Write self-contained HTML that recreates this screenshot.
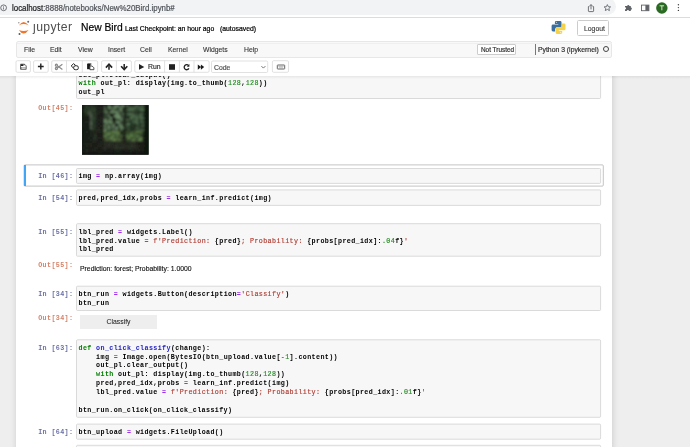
<!DOCTYPE html>
<html><head><meta charset="utf-8">
<style>
*{box-sizing:border-box}
html,body{margin:0;padding:0}
body{width:690px;height:447px;overflow:hidden;position:relative;background:#fff;font-family:"Liberation Sans",sans-serif}
.a{position:absolute}
body>*{will-change:transform}
.t{position:absolute;white-space:pre;line-height:1;font-family:"Liberation Sans",sans-serif;-webkit-text-stroke:0.2px currentColor}
.m{position:absolute;white-space:pre;font-family:"Liberation Mono",monospace;font-size:6.700px;letter-spacing:0.384px;line-height:8.88px;color:#000;margin:0;font-weight:bold}
.pr{position:absolute;white-space:pre;font-family:"Liberation Mono",monospace;font-size:6.700px;letter-spacing:0.384px;line-height:1;left:38.20px;text-align:left;font-weight:bold;opacity:0.72}
.pin{color:#2c3580}
.pout{color:#C4502C}
.box{position:absolute;left:76.3px;width:224.4px;right:auto;background:#f7f7f7;border:0.6px solid #cfcfcf;border-radius:1px}
.btn{position:absolute;top:60.5px;height:12px;background:#fff;border:0.6px solid #ccc;border-radius:1.5px}
.k{color:#008000;font-weight:bold}
.o{color:#A030F0;font-weight:bold}
.n{color:#1f8a1f;font-weight:normal;-webkit-text-stroke:0.15px currentColor}
.s{color:#B03a30;font-weight:normal;-webkit-text-stroke:0.15px currentColor}
.d{color:#1c1cc8}
.bk{color:#997}
</style></head><body>

<!-- ===== Chrome toolbar ===== -->
<div class="a" style="left:0;top:0;width:690px;height:17.5px;background:#fff;border-bottom:0.7px solid #dcdcdc"></div>
<div class="a" style="left:-20px;top:-2px;width:635.5px;height:16.8px;background:#f2f3f5;border-radius:9px"></div>
<svg class="a" style="left:0;top:4px" width="8" height="8" viewBox="0 0 8 8"><circle cx="3.6" cy="3.8" r="2.9" fill="none" stroke="#5f6368" stroke-width="0.9"/><rect x="3.2" y="3.3" width="0.8" height="2.2" fill="#5f6368"/><rect x="3.2" y="1.9" width="0.8" height="0.8" fill="#5f6368"/></svg>
<div class="t" style="left:11.9px;top:4.9px;font-size:7.9px;color:#202124;transform:scaleY(1.16);transform-origin:0 6.7px">localhost<span style="color:#50545a">:8888/notebooks/New%20Bird.ipynb#</span></div>
<!-- chrome icons -->
<svg class="a" style="left:0;top:0" width="690" height="17" viewBox="0 0 690 17">
 <path d="M589.3 6.6 H588.4 V10.9 Q588.4 11.6 589.1 11.6 H592.9 Q593.6 11.6 593.6 10.9 V6.6 H592.7" fill="none" stroke="#5f6368" stroke-width="0.9"/>
 <path d="M591 9.4 V4.8" stroke="#5f6368" stroke-width="0.9"/>
 <path d="M589.5 6.2 L591 4.5 L592.5 6.2" fill="none" stroke="#5f6368" stroke-width="0.9"/>
 <path d="M607.35 4.6 L608.3 6.7 L610.6 6.9 L608.9 8.4 L609.4 10.6 L607.35 9.4 L605.3 10.6 L605.8 8.4 L604.1 6.9 L606.4 6.7 Z" fill="none" stroke="#5f6368" stroke-width="0.85" stroke-linejoin="round"/>
 <path d="M625 6.1 H627.2 A1.1 1.1 0 0 1 629.4 6.1 H630.8 V7.6 A1.1 1.1 0 0 1 630.8 9.8 V11 H629 A1.1 1.1 0 0 0 626.8 11 H625 V9.4 A1.1 1.1 0 0 0 625 7.2 Z" fill="#5f6368"/>
 <rect x="641.5" y="5.1" width="7.4" height="5.6" fill="none" stroke="#5f6368" stroke-width="0.9"/>
 <rect x="645.4" y="5.1" width="3.5" height="5.6" fill="#5f6368"/>
 <circle cx="661.85" cy="7.95" r="5.7" fill="#2b6a22"/>
 <path d="M659.6 5.8 H664.1 M661.85 5.8 V10.3" stroke="#e8f0e0" stroke-width="0.9"/>
 <circle cx="678.4" cy="4.8" r="0.7" fill="#3c4043"/>
 <circle cx="678.4" cy="7.6" r="0.7" fill="#3c4043"/>
 <circle cx="678.4" cy="10.4" r="0.7" fill="#3c4043"/>
</svg>

<!-- ===== Jupyter header ===== -->
<svg class="a" style="left:15px;top:18px" width="18" height="19" viewBox="0 0 18 19">
 <path d="M3.8 7.4 Q8.7 0.4 13.6 7.4 Q8.7 4.6 3.8 7.4 Z" fill="#F37726"/>
 <path d="M3.8 11.9 Q8.7 19.1 13.6 11.9 Q8.7 14.2 3.8 11.9 Z" fill="#F37726"/>
 <circle cx="3.8" cy="4.7" r="0.8" fill="#9a9a9a"/>
 <circle cx="13.2" cy="3.8" r="1" fill="#6a6a6a"/>
 <circle cx="4.5" cy="16" r="1" fill="#5a5a5a"/>
</svg>
<div class="t" style="left:33.4px;top:21.0px;font-size:12.2px;letter-spacing:0.42px;color:#4e4e4e;-webkit-text-stroke:0">ȷupyter</div>
<div class="t" style="left:81.2px;top:23.2px;font-size:10.3px;color:#000">New Bird</div>
<div class="t" style="left:125px;top:25.5px;font-size:6.83px;color:#000">Last Checkpoint: an hour ago</div>
<div class="t" style="left:219.5px;top:25.5px;font-size:6.83px;color:#000">(autosaved)</div>
<!-- python logo -->
<svg class="a" style="left:0;top:0" width="600" height="40" viewBox="0 0 600 40">
 <defs><path id="py" d="M556.2 20.9 H560.1 Q561.5 20.9 561.5 22.3 V26.4 Q561.5 27.8 560.1 27.8 H556.6 Q555.1 27.8 555.1 29.3 V31.4 H553 Q551.6 31.4 551.6 30 V25.9 Q551.6 24.5 553 24.5 H558.3 V23.9 H554.9 V22.2 Q554.9 20.9 556.2 20.9 Z"/></defs>
 <use href="#py" fill="#3b6fa0"/>
 <use href="#py" fill="#f5d24b" transform="rotate(180 558.55 27.4)"/>
 <circle cx="556.4" cy="22.2" r="0.55" fill="#dfe8f0"/>
 <circle cx="560.7" cy="32.6" r="0.55" fill="#fff8d8"/>
</svg>
<div class="a" style="left:577.3px;top:20.2px;width:31.7px;height:15.7px;border:0.6px solid #ccc;border-radius:1.5px;background:#fff"></div>
<div class="t" style="left:583.5px;top:26.0px;font-size:6.83px;color:#333;-webkit-text-stroke:0.1px">Logout</div>

<!-- menubar -->
<div class="a" style="left:15.7px;top:40.5px;width:596px;height:16.8px;background:#f8f8f8;border:0.6px solid #e7e7e7;border-radius:2px"></div>
<div class="a" style="left:16.5px;top:43.3px;width:594.5px;height:0.6px;background:#efefef"></div>
<div class="t" style="left:24.2px;top:46.6px;font-size:6.83px;color:#333;-webkit-text-stroke:0.1px">File</div>
<div class="t" style="left:50.4px;top:46.6px;font-size:6.83px;color:#333;-webkit-text-stroke:0.1px">Edit</div>
<div class="t" style="left:77.6px;top:46.6px;font-size:6.83px;color:#333;-webkit-text-stroke:0.1px">View</div>
<div class="t" style="left:107.6px;top:46.6px;font-size:6.83px;color:#333;-webkit-text-stroke:0.1px">Insert</div>
<div class="t" style="left:140.3px;top:46.6px;font-size:6.83px;color:#333;-webkit-text-stroke:0.1px">Cell</div>
<div class="t" style="left:167.6px;top:46.6px;font-size:6.83px;color:#333;-webkit-text-stroke:0.1px">Kernel</div>
<div class="t" style="left:203.2px;top:46.6px;font-size:6.83px;color:#333;-webkit-text-stroke:0.1px">Widgets</div>
<div class="t" style="left:244.3px;top:46.6px;font-size:6.83px;color:#333;-webkit-text-stroke:0.1px">Help</div>
<div class="a" style="left:477.4px;top:44px;width:39.4px;height:10.5px;border:0.6px solid #ccc;border-radius:1px;background:#fff"></div>
<div class="t" style="left:480.9px;top:46.8px;font-size:6.4px;color:#333">Not Trusted</div>
<div class="a" style="left:535px;top:44px;width:0.8px;height:10.5px;background:#777"></div>
<div class="t" style="left:538.2px;top:46.6px;font-size:6.83px;color:#333">Python 3 (ipykernel)</div>
<div class="a" style="left:602.6px;top:46.4px;width:6px;height:6px;border:0.8px solid #444;border-radius:50%"></div>

<!-- toolbar -->
<svg class="a" style="left:0;top:0" width="300" height="80" viewBox="0 0 300 80">
 <g fill="#fff" stroke="#d4d4d4" stroke-width="0.7">
  <rect x="16" y="60.7" width="14.4" height="11.6" rx="1.3"/>
  <rect x="33.6" y="60.7" width="14.6" height="11.6" rx="1.3"/>
  <rect x="51.7" y="60.7" width="45.9" height="11.6" rx="1.3"/>
  <rect x="101.6" y="60.7" width="29.8" height="11.6" rx="1.3"/>
  <rect x="134.8" y="60.7" width="74.3" height="11.6" rx="1.3"/>
  <rect x="211.5" y="61" width="56.2" height="11.5" rx="1.3"/>
  <rect x="272.4" y="60.7" width="16.1" height="11.6" rx="1.3"/>
 </g>
 <g stroke="#d4d4d4" stroke-width="0.7">
  <path d="M66.5 60.7 V72.3 M82.3 60.7 V72.3 M116.4 60.7 V72.3 M164.6 60.7 V72.3 M179.4 60.7 V72.3 M194 60.7 V72.3"/>
 </g>
 <!-- save -->
 <path d="M20.5 64.2 H24.5 L26.2 65.9 V69.3 H20.5 Z" fill="#fff" stroke="#555" stroke-width="0.9" stroke-linejoin="round"/>
 <rect x="21" y="64.3" width="2.4" height="1.7" fill="#222"/>
 <circle cx="24.3" cy="64.7" r="0.55" fill="#333"/>
 <rect x="21.6" y="67.4" width="3.6" height="1.5" fill="#fff" stroke="#777" stroke-width="0.5"/>
 <!-- plus -->
 <path d="M37.9 66.5 H43.7 M40.8 63.6 V69.4" stroke="#222" stroke-width="1.4"/>
 <!-- scissors -->
 <g fill="none" stroke="#8a8a8a" stroke-width="1.2">
  <circle cx="56.4" cy="65.2" r="1.05"/>
  <circle cx="56.4" cy="68.5" r="1.05"/>
  <path d="M57.3 65.8 L62.4 69.4 M57.3 67.9 L62.4 64.3"/>
 </g>
 <!-- copy -->
 <g fill="#fff" stroke="#2a2a2a" stroke-width="1" stroke-linejoin="round">
  <path d="M71.2 66 L73.5 63.6 L75.9 65.7 L73.6 68.1 Z"/>
  <rect x="73.7" y="65.8" width="4.6" height="3.9" rx="1.5"/>
 </g>
 <!-- paste -->
 <rect x="87.1" y="63.8" width="3.3" height="5.4" fill="#1a1a1a"/>
 <rect x="87.6" y="63.5" width="3.8" height="1" fill="#1a1a1a"/>
 <path d="M89.9 66 H92.1 L93.9 67.8 V69.7 H89.9 Z" fill="#fff" stroke="#333" stroke-width="0.85" stroke-linejoin="round"/>
 <!-- up -->
 <path d="M109 69.8 V65.2" stroke="#222" stroke-width="1.5"/>
 <path d="M105.9 67.6 L109 64.2 L112.1 67.6" fill="none" stroke="#222" stroke-width="1.6"/>
 <!-- down -->
 <path d="M124.2 64.1 V68.7" stroke="#222" stroke-width="1.5"/>
 <path d="M121.1 66.2 L124.2 69.6 L127.3 66.2" fill="none" stroke="#222" stroke-width="1.6"/>
 <!-- play -->
 <path d="M139 64 L144.3 66.9 L139 69.7 Z" fill="#222"/>
 <!-- stop -->
 <rect x="169" y="64.2" width="6" height="5.6" fill="#222"/>
 <!-- restart -->
 <path d="M188.6 65.6 A2.5 2.5 0 1 0 188.9 68.4" fill="none" stroke="#222" stroke-width="1.3"/>
 <path d="M189.4 64 V66.7 H186.8 Z" fill="#222"/>
 <!-- fast forward -->
 <path d="M197.8 64.4 L201.1 67.1 L197.8 69.8 Z M200.9 64.4 L204.2 67.1 L200.9 69.8 Z" fill="#1a1a1a"/>
 <!-- chevron -->
 <path d="M261.4 66.1 L263.4 68.1 L265.4 66.1" fill="none" stroke="#555" stroke-width="0.8"/>
 <!-- keyboard -->
 <rect x="277.3" y="65" width="7.4" height="4" rx="0.5" fill="#fff" stroke="#555" stroke-width="0.9"/>
 <path d="M278.4 66.4 H283.6 M278.9 67.8 H283.1" stroke="#888" stroke-width="0.55"/>
</svg>
<div class="t" style="left:147.8px;top:63.8px;font-size:6.83px;color:#333">Run</div>
<div class="t" style="left:213.8px;top:64.8px;font-size:6.83px;color:#555">Code</div>

<!-- ===== Notebook area ===== -->
<div class="a" style="left:0;top:0;width:690px;height:447px;clip-path:inset(76.2px 0 0 0)">
<div class="a" style="left:0;top:76.2px;width:690px;height:371px;background:#eeeeee;overflow:hidden">
 <div class="a" style="left:15.6px;top:-20px;width:596.1px;height:420px;background:#fff;box-shadow:0 0 6px 0.5px rgba(87,87,87,0.2)"></div>
</div>
<svg class="a" style="left:0;top:0" width="690" height="447"><g fill="#f7f7f7" stroke="#cfcfcf" stroke-width="0.75"><rect x="76.5" y="60.00" width="524.1" height="38.50" rx="1"/><rect x="76.5" y="168.50" width="524.1" height="14.90" rx="1"/><rect x="76.5" y="189.90" width="524.1" height="15.50" rx="1"/><rect x="76.5" y="223.70" width="524.1" height="32.50" rx="1"/><rect x="76.5" y="286.20" width="524.1" height="24.30" rx="1"/><rect x="76.5" y="339.80" width="524.1" height="77.50" rx="1"/><rect x="76.5" y="424.10" width="524.1" height="15.10" rx="1"/><rect x="76.5" y="445.30" width="524.1" height="24.70" rx="1"/></g></svg>
<pre class="m" style="left:78.50px;top:70.59px">out_pl.clear_output()</pre>
<pre class="m" style="left:78.50px;top:78.77px"><span class="k">with</span> out_pl: display(img.to_thumb(<span class="n">128</span>,<span class="n">128</span>))
out_pl</pre>
<div class="pr pout" style="top:105.06px">Out[45]:</div>
<svg class="a" style="left:82.2px;top:105.2px" width="66.6" height="49.7" viewBox="0 0 67 50" preserveAspectRatio="none"><defs><filter id="bl" x="-10%" y="-10%" width="120%" height="120%"><feGaussianBlur stdDeviation="0.85"/></filter><clipPath id="fc"><rect width="67" height="50"/></clipPath></defs><rect width="67" height="50" fill="#1e2a1c"/><g clip-path="url(#fc)"><g filter="url(#bl)" shape-rendering="crispEdges"><rect x="-4" y="-4" width="75" height="58" fill="#1c261b"/><rect x="0" y="0" width="2" height="2" fill="#0f160f"/><rect x="2" y="0" width="2" height="2" fill="#202c1f"/><rect x="4" y="0" width="2" height="2" fill="#2b3b29"/><rect x="6" y="0" width="2" height="2" fill="#1e2a1d"/><rect x="8" y="0" width="2" height="2" fill="#283727"/><rect x="10" y="0" width="2" height="2" fill="#253223"/><rect x="12" y="0" width="2" height="2" fill="#1e291d"/><rect x="14" y="0" width="2" height="2" fill="#1e201b"/><rect x="16" y="0" width="2" height="2" fill="#191b17"/><rect x="18" y="0" width="2" height="2" fill="#1d1f1a"/><rect x="20" y="0" width="2" height="2" fill="#1a1b17"/><rect x="22" y="0" width="2" height="2" fill="#283427"/><rect x="24" y="0" width="2" height="2" fill="#111510"/><rect x="26" y="0" width="2" height="2" fill="#617e5d"/><rect x="28" y="0" width="2" height="2" fill="#2b3829"/><rect x="30" y="0" width="2" height="2" fill="#334230"/><rect x="32" y="0" width="2" height="2" fill="#526a4e"/><rect x="34" y="0" width="2" height="2" fill="#6b8a66"/><rect x="36" y="0" width="2" height="2" fill="#4e654b"/><rect x="38" y="0" width="2" height="2" fill="#40533d"/><rect x="40" y="0" width="2" height="2" fill="#6d8d68"/><rect x="42" y="0" width="2" height="2" fill="#161915"/><rect x="44" y="0" width="2" height="2" fill="#4b6749"/><rect x="46" y="0" width="2" height="2" fill="#2d3e2c"/><rect x="48" y="0" width="2" height="2" fill="#253324"/><rect x="50" y="0" width="2" height="2" fill="#243123"/><rect x="52" y="0" width="2" height="2" fill="#2e3f2d"/><rect x="54" y="0" width="2" height="2" fill="#496447"/><rect x="56" y="0" width="2" height="2" fill="#273626"/><rect x="58" y="0" width="2" height="2" fill="#3c533b"/><rect x="60" y="0" width="2" height="2" fill="#3f573e"/><rect x="62" y="0" width="2" height="2" fill="#10160f"/><rect x="64" y="0" width="2" height="2" fill="#10170f"/><rect x="66" y="0" width="2" height="2" fill="#0f150e"/><rect x="0" y="2" width="2" height="2" fill="#0f150e"/><rect x="2" y="2" width="2" height="2" fill="#212e20"/><rect x="4" y="2" width="2" height="2" fill="#2b3b2a"/><rect x="6" y="2" width="2" height="2" fill="#263424"/><rect x="8" y="2" width="2" height="2" fill="#243122"/><rect x="10" y="2" width="2" height="2" fill="#293928"/><rect x="12" y="2" width="2" height="2" fill="#273525"/><rect x="14" y="2" width="2" height="2" fill="#1c1e19"/><rect x="16" y="2" width="2" height="2" fill="#21231d"/><rect x="18" y="2" width="2" height="2" fill="#20221d"/><rect x="20" y="2" width="2" height="2" fill="#1b1d18"/><rect x="22" y="2" width="2" height="2" fill="#4e654a"/><rect x="24" y="2" width="2" height="2" fill="#121510"/><rect x="26" y="2" width="2" height="2" fill="#658361"/><rect x="28" y="2" width="2" height="2" fill="#5a7456"/><rect x="30" y="2" width="2" height="2" fill="#384835"/><rect x="32" y="2" width="2" height="2" fill="#6d8d68"/><rect x="34" y="2" width="2" height="2" fill="#2b3729"/><rect x="36" y="2" width="2" height="2" fill="#42553f"/><rect x="38" y="2" width="2" height="2" fill="#5c7758"/><rect x="40" y="2" width="2" height="2" fill="#2d3a2b"/><rect x="42" y="2" width="2" height="2" fill="#191c17"/><rect x="44" y="2" width="2" height="2" fill="#202c1f"/><rect x="46" y="2" width="2" height="2" fill="#41593f"/><rect x="48" y="2" width="2" height="2" fill="#466044"/><rect x="50" y="2" width="2" height="2" fill="#3c523a"/><rect x="52" y="2" width="2" height="2" fill="#4c684a"/><rect x="54" y="2" width="2" height="2" fill="#2e402d"/><rect x="56" y="2" width="2" height="2" fill="#425b40"/><rect x="58" y="2" width="2" height="2" fill="#3d543b"/><rect x="60" y="2" width="2" height="2" fill="#3c533a"/><rect x="62" y="2" width="2" height="2" fill="#10160f"/><rect x="64" y="2" width="2" height="2" fill="#111810"/><rect x="66" y="2" width="2" height="2" fill="#111810"/><rect x="0" y="4" width="2" height="2" fill="#10160f"/><rect x="2" y="4" width="2" height="2" fill="#2b3b29"/><rect x="4" y="4" width="2" height="2" fill="#1e291d"/><rect x="6" y="4" width="2" height="2" fill="#2c3c2a"/><rect x="8" y="4" width="2" height="2" fill="#2b3a29"/><rect x="10" y="4" width="2" height="2" fill="#324530"/><rect x="12" y="4" width="2" height="2" fill="#2e402d"/><rect x="14" y="4" width="2" height="2" fill="#1c1d19"/><rect x="16" y="4" width="2" height="2" fill="#1d1e1a"/><rect x="18" y="4" width="2" height="2" fill="#20211c"/><rect x="20" y="4" width="2" height="2" fill="#191b16"/><rect x="22" y="4" width="2" height="2" fill="#455942"/><rect x="24" y="4" width="2" height="2" fill="#2e3c2c"/><rect x="26" y="4" width="2" height="2" fill="#11140f"/><rect x="28" y="4" width="2" height="2" fill="#263124"/><rect x="30" y="4" width="2" height="2" fill="#5d7859"/><rect x="32" y="4" width="2" height="2" fill="#2b3829"/><rect x="34" y="4" width="2" height="2" fill="#354432"/><rect x="36" y="4" width="2" height="2" fill="#40523d"/><rect x="38" y="4" width="2" height="2" fill="#658260"/><rect x="40" y="4" width="2" height="2" fill="#283326"/><rect x="42" y="4" width="2" height="2" fill="#191c17"/><rect x="44" y="4" width="2" height="2" fill="#3b5139"/><rect x="46" y="4" width="2" height="2" fill="#4c694a"/><rect x="48" y="4" width="2" height="2" fill="#496447"/><rect x="50" y="4" width="2" height="2" fill="#4b6749"/><rect x="52" y="4" width="2" height="2" fill="#2c3d2b"/><rect x="54" y="4" width="2" height="2" fill="#344732"/><rect x="56" y="4" width="2" height="2" fill="#31432f"/><rect x="58" y="4" width="2" height="2" fill="#4c694a"/><rect x="60" y="4" width="2" height="2" fill="#506e4e"/><rect x="62" y="4" width="2" height="2" fill="#0f150e"/><rect x="64" y="4" width="2" height="2" fill="#0f150e"/><rect x="66" y="4" width="2" height="2" fill="#0f150e"/><rect x="0" y="6" width="2" height="2" fill="#0f150e"/><rect x="2" y="6" width="2" height="2" fill="#273626"/><rect x="4" y="6" width="2" height="2" fill="#293928"/><rect x="6" y="6" width="2" height="2" fill="#414e40"/><rect x="8" y="6" width="2" height="2" fill="#3a4538"/><rect x="10" y="6" width="2" height="2" fill="#263424"/><rect x="12" y="6" width="2" height="2" fill="#253223"/><rect x="14" y="6" width="2" height="2" fill="#1f201b"/><rect x="16" y="6" width="2" height="2" fill="#23251f"/><rect x="18" y="6" width="2" height="2" fill="#20221d"/><rect x="20" y="6" width="2" height="2" fill="#1e201b"/><rect x="22" y="6" width="2" height="2" fill="#51694e"/><rect x="24" y="6" width="2" height="2" fill="#566f52"/><rect x="26" y="6" width="2" height="2" fill="#10140f"/><rect x="28" y="6" width="2" height="2" fill="#678563"/><rect x="30" y="6" width="2" height="2" fill="#5e795a"/><rect x="32" y="6" width="2" height="2" fill="#658361"/><rect x="34" y="6" width="2" height="2" fill="#5f7b5b"/><rect x="36" y="6" width="2" height="2" fill="#40523d"/><rect x="38" y="6" width="2" height="2" fill="#40533d"/><rect x="40" y="6" width="2" height="2" fill="#293628"/><rect x="42" y="6" width="2" height="2" fill="#191d18"/><rect x="44" y="6" width="2" height="2" fill="#212d20"/><rect x="46" y="6" width="2" height="2" fill="#212e20"/><rect x="48" y="6" width="2" height="2" fill="#293827"/><rect x="50" y="6" width="2" height="2" fill="#263525"/><rect x="52" y="6" width="2" height="2" fill="#30412e"/><rect x="54" y="6" width="2" height="2" fill="#202d1f"/><rect x="56" y="6" width="2" height="2" fill="#1e291d"/><rect x="58" y="6" width="2" height="2" fill="#263425"/><rect x="60" y="6" width="2" height="2" fill="#233022"/><rect x="62" y="6" width="2" height="2" fill="#10160f"/><rect x="64" y="6" width="2" height="2" fill="#0f150e"/><rect x="66" y="6" width="2" height="2" fill="#111810"/><rect x="0" y="8" width="2" height="2" fill="#10170f"/><rect x="2" y="8" width="2" height="2" fill="#202c1f"/><rect x="4" y="8" width="2" height="2" fill="#222f21"/><rect x="6" y="8" width="2" height="2" fill="#445142"/><rect x="8" y="8" width="2" height="2" fill="#445243"/><rect x="10" y="8" width="2" height="2" fill="#202b1e"/><rect x="12" y="8" width="2" height="2" fill="#2f402d"/><rect x="14" y="8" width="2" height="2" fill="#23251f"/><rect x="16" y="8" width="2" height="2" fill="#1e1f1a"/><rect x="18" y="8" width="2" height="2" fill="#1e1f1b"/><rect x="20" y="8" width="2" height="2" fill="#1a1b17"/><rect x="22" y="8" width="2" height="2" fill="#293527"/><rect x="24" y="8" width="2" height="2" fill="#3c4d39"/><rect x="26" y="8" width="2" height="2" fill="#364634"/><rect x="28" y="8" width="2" height="2" fill="#121611"/><rect x="30" y="8" width="2" height="2" fill="#2e3b2c"/><rect x="32" y="8" width="2" height="2" fill="#232e22"/><rect x="34" y="8" width="2" height="2" fill="#6b8a66"/><rect x="36" y="8" width="2" height="2" fill="#4a6047"/><rect x="38" y="8" width="2" height="2" fill="#2d3a2b"/><rect x="40" y="8" width="2" height="2" fill="#4c6248"/><rect x="42" y="8" width="2" height="2" fill="#161915"/><rect x="44" y="8" width="2" height="2" fill="#3a4f38"/><rect x="46" y="8" width="2" height="2" fill="#51704f"/><rect x="48" y="8" width="2" height="2" fill="#4b6749"/><rect x="50" y="8" width="2" height="2" fill="#425b40"/><rect x="52" y="8" width="2" height="2" fill="#2b3c2a"/><rect x="54" y="8" width="2" height="2" fill="#314330"/><rect x="56" y="8" width="2" height="2" fill="#263525"/><rect x="58" y="8" width="2" height="2" fill="#466144"/><rect x="60" y="8" width="2" height="2" fill="#3a4f38"/><rect x="62" y="8" width="2" height="2" fill="#111710"/><rect x="64" y="8" width="2" height="2" fill="#0f160f"/><rect x="66" y="8" width="2" height="2" fill="#0f150e"/><rect x="0" y="10" width="2" height="2" fill="#111810"/><rect x="2" y="10" width="2" height="2" fill="#1c221a"/><rect x="4" y="10" width="2" height="2" fill="#1b2119"/><rect x="6" y="10" width="2" height="2" fill="#1b2019"/><rect x="8" y="10" width="2" height="2" fill="#51624f"/><rect x="10" y="10" width="2" height="2" fill="#2d3d2b"/><rect x="12" y="10" width="2" height="2" fill="#222e20"/><rect x="14" y="10" width="2" height="2" fill="#1e201b"/><rect x="16" y="10" width="2" height="2" fill="#1d1e19"/><rect x="18" y="10" width="2" height="2" fill="#191b17"/><rect x="20" y="10" width="2" height="2" fill="#191b17"/><rect x="22" y="10" width="2" height="2" fill="#374735"/><rect x="24" y="10" width="2" height="2" fill="#354533"/><rect x="26" y="10" width="2" height="2" fill="#577053"/><rect x="28" y="10" width="2" height="2" fill="#131611"/><rect x="30" y="10" width="2" height="2" fill="#111510"/><rect x="32" y="10" width="2" height="2" fill="#6a8965"/><rect x="34" y="10" width="2" height="2" fill="#6e8e69"/><rect x="36" y="10" width="2" height="2" fill="#6b8b67"/><rect x="38" y="10" width="2" height="2" fill="#3e503b"/><rect x="40" y="10" width="2" height="2" fill="#324130"/><rect x="42" y="10" width="2" height="2" fill="#171a16"/><rect x="44" y="10" width="2" height="2" fill="#283727"/><rect x="46" y="10" width="2" height="2" fill="#283827"/><rect x="48" y="10" width="2" height="2" fill="#3f563d"/><rect x="50" y="10" width="2" height="2" fill="#4d6a4b"/><rect x="52" y="10" width="2" height="2" fill="#4a6648"/><rect x="54" y="10" width="2" height="2" fill="#374c35"/><rect x="56" y="10" width="2" height="2" fill="#40583e"/><rect x="58" y="10" width="2" height="2" fill="#486346"/><rect x="60" y="10" width="2" height="2" fill="#222f21"/><rect x="62" y="10" width="2" height="2" fill="#101710"/><rect x="64" y="10" width="2" height="2" fill="#111810"/><rect x="66" y="10" width="2" height="2" fill="#111710"/><rect x="0" y="12" width="2" height="2" fill="#111710"/><rect x="2" y="12" width="2" height="2" fill="#191e17"/><rect x="4" y="12" width="2" height="2" fill="#171b15"/><rect x="6" y="12" width="2" height="2" fill="#1b2019"/><rect x="8" y="12" width="2" height="2" fill="#435142"/><rect x="10" y="12" width="2" height="2" fill="#2e3f2c"/><rect x="12" y="12" width="2" height="2" fill="#324430"/><rect x="14" y="12" width="2" height="2" fill="#1d1f1a"/><rect x="16" y="12" width="2" height="2" fill="#1d1f1a"/><rect x="18" y="12" width="2" height="2" fill="#23241f"/><rect x="20" y="12" width="2" height="2" fill="#20221d"/><rect x="22" y="12" width="2" height="2" fill="#2f3c2c"/><rect x="24" y="12" width="2" height="2" fill="#2b3829"/><rect x="26" y="12" width="2" height="2" fill="#2d3a2b"/><rect x="28" y="12" width="2" height="2" fill="#688663"/><rect x="30" y="12" width="2" height="2" fill="#121611"/><rect x="32" y="12" width="2" height="2" fill="#2d3a2b"/><rect x="34" y="12" width="2" height="2" fill="#617e5d"/><rect x="36" y="12" width="2" height="2" fill="#6d8d68"/><rect x="38" y="12" width="2" height="2" fill="#546d51"/><rect x="40" y="12" width="2" height="2" fill="#3d4e3a"/><rect x="42" y="12" width="2" height="2" fill="#191c17"/><rect x="44" y="12" width="2" height="2" fill="#253223"/><rect x="46" y="12" width="2" height="2" fill="#1e2a1e"/><rect x="48" y="12" width="2" height="2" fill="#516f4f"/><rect x="50" y="12" width="2" height="2" fill="#40583e"/><rect x="52" y="12" width="2" height="2" fill="#394f38"/><rect x="54" y="12" width="2" height="2" fill="#4f6c4d"/><rect x="56" y="12" width="2" height="2" fill="#354833"/><rect x="58" y="12" width="2" height="2" fill="#4c6849"/><rect x="60" y="12" width="2" height="2" fill="#496547"/><rect x="62" y="12" width="2" height="2" fill="#0f150e"/><rect x="64" y="12" width="2" height="2" fill="#0f150e"/><rect x="66" y="12" width="2" height="2" fill="#0f160f"/><rect x="0" y="14" width="2" height="2" fill="#0f150e"/><rect x="2" y="14" width="2" height="2" fill="#191e18"/><rect x="4" y="14" width="2" height="2" fill="#171c16"/><rect x="6" y="14" width="2" height="2" fill="#181d17"/><rect x="8" y="14" width="2" height="2" fill="#3d4a3c"/><rect x="10" y="14" width="2" height="2" fill="#30422e"/><rect x="12" y="14" width="2" height="2" fill="#243223"/><rect x="14" y="14" width="2" height="2" fill="#1e1f1a"/><rect x="16" y="14" width="2" height="2" fill="#1f211c"/><rect x="18" y="14" width="2" height="2" fill="#22241e"/><rect x="20" y="14" width="2" height="2" fill="#1d1f1a"/><rect x="22" y="14" width="2" height="2" fill="#698764"/><rect x="24" y="14" width="2" height="2" fill="#485d45"/><rect x="26" y="14" width="2" height="2" fill="#4b6047"/><rect x="28" y="14" width="2" height="2" fill="#4a6047"/><rect x="30" y="14" width="2" height="2" fill="#10130f"/><rect x="32" y="14" width="2" height="2" fill="#111510"/><rect x="34" y="14" width="2" height="2" fill="#303e2d"/><rect x="36" y="14" width="2" height="2" fill="#222c20"/><rect x="38" y="14" width="2" height="2" fill="#5f7b5b"/><rect x="40" y="14" width="2" height="2" fill="#2f3c2d"/><rect x="42" y="14" width="2" height="2" fill="#191c17"/><rect x="44" y="14" width="2" height="2" fill="#445d42"/><rect x="46" y="14" width="2" height="2" fill="#3b5139"/><rect x="48" y="14" width="2" height="2" fill="#2f402d"/><rect x="50" y="14" width="2" height="2" fill="#394e37"/><rect x="52" y="14" width="2" height="2" fill="#3b5139"/><rect x="54" y="14" width="2" height="2" fill="#476245"/><rect x="56" y="14" width="2" height="2" fill="#233122"/><rect x="58" y="14" width="2" height="2" fill="#3b5139"/><rect x="60" y="14" width="2" height="2" fill="#2b3b2a"/><rect x="62" y="14" width="2" height="2" fill="#0f160f"/><rect x="64" y="14" width="2" height="2" fill="#111710"/><rect x="66" y="14" width="2" height="2" fill="#10160f"/><rect x="0" y="16" width="2" height="2" fill="#10170f"/><rect x="2" y="16" width="2" height="2" fill="#1b2019"/><rect x="4" y="16" width="2" height="2" fill="#1c211a"/><rect x="6" y="16" width="2" height="2" fill="#181d17"/><rect x="8" y="16" width="2" height="2" fill="#4b5a4a"/><rect x="10" y="16" width="2" height="2" fill="#283626"/><rect x="12" y="16" width="2" height="2" fill="#283726"/><rect x="14" y="16" width="2" height="2" fill="#20221d"/><rect x="16" y="16" width="2" height="2" fill="#1e1f1a"/><rect x="18" y="16" width="2" height="2" fill="#1e201b"/><rect x="20" y="16" width="2" height="2" fill="#1e1f1b"/><rect x="22" y="16" width="2" height="2" fill="#6a8966"/><rect x="24" y="16" width="2" height="2" fill="#587154"/><rect x="26" y="16" width="2" height="2" fill="#658361"/><rect x="28" y="16" width="2" height="2" fill="#6a8966"/><rect x="30" y="16" width="2" height="2" fill="#364533"/><rect x="32" y="16" width="2" height="2" fill="#121510"/><rect x="34" y="16" width="2" height="2" fill="#6b8a66"/><rect x="36" y="16" width="2" height="2" fill="#637f5e"/><rect x="38" y="16" width="2" height="2" fill="#2c392a"/><rect x="40" y="16" width="2" height="2" fill="#2b3729"/><rect x="42" y="16" width="2" height="2" fill="#181c17"/><rect x="44" y="16" width="2" height="2" fill="#212e20"/><rect x="46" y="16" width="2" height="2" fill="#2a3a29"/><rect x="48" y="16" width="2" height="2" fill="#222e21"/><rect x="50" y="16" width="2" height="2" fill="#41593f"/><rect x="52" y="16" width="2" height="2" fill="#476245"/><rect x="54" y="16" width="2" height="2" fill="#4d6a4b"/><rect x="56" y="16" width="2" height="2" fill="#263425"/><rect x="58" y="16" width="2" height="2" fill="#435d41"/><rect x="60" y="16" width="2" height="2" fill="#40593f"/><rect x="62" y="16" width="2" height="2" fill="#0f150e"/><rect x="64" y="16" width="2" height="2" fill="#111810"/><rect x="66" y="16" width="2" height="2" fill="#111810"/><rect x="0" y="18" width="2" height="2" fill="#0f150e"/><rect x="2" y="18" width="2" height="2" fill="#1c211a"/><rect x="4" y="18" width="2" height="2" fill="#181d17"/><rect x="6" y="18" width="2" height="2" fill="#191e17"/><rect x="8" y="18" width="2" height="2" fill="#566854"/><rect x="10" y="18" width="2" height="2" fill="#2f402d"/><rect x="12" y="18" width="2" height="2" fill="#202c1f"/><rect x="14" y="18" width="2" height="2" fill="#1d1f1a"/><rect x="16" y="18" width="2" height="2" fill="#1e201b"/><rect x="18" y="18" width="2" height="2" fill="#1c1e19"/><rect x="20" y="18" width="2" height="2" fill="#1b1c18"/><rect x="22" y="18" width="2" height="2" fill="#3a4b37"/><rect x="24" y="18" width="2" height="2" fill="#597355"/><rect x="26" y="18" width="2" height="2" fill="#232d21"/><rect x="28" y="18" width="2" height="2" fill="#4c6349"/><rect x="30" y="18" width="2" height="2" fill="#445741"/><rect x="32" y="18" width="2" height="2" fill="#3c473b"/><rect x="34" y="18" width="2" height="2" fill="#111410"/><rect x="36" y="18" width="2" height="2" fill="#526a4e"/><rect x="38" y="18" width="2" height="2" fill="#495e46"/><rect x="40" y="18" width="2" height="2" fill="#263225"/><rect x="42" y="18" width="2" height="2" fill="#1b1f19"/><rect x="44" y="18" width="2" height="2" fill="#476245"/><rect x="46" y="18" width="2" height="2" fill="#516f4f"/><rect x="48" y="18" width="2" height="2" fill="#233022"/><rect x="50" y="18" width="2" height="2" fill="#2c3c2a"/><rect x="52" y="18" width="2" height="2" fill="#202c1f"/><rect x="54" y="18" width="2" height="2" fill="#476145"/><rect x="56" y="18" width="2" height="2" fill="#2c3c2b"/><rect x="58" y="18" width="2" height="2" fill="#243223"/><rect x="60" y="18" width="2" height="2" fill="#344732"/><rect x="62" y="18" width="2" height="2" fill="#111810"/><rect x="64" y="18" width="2" height="2" fill="#111810"/><rect x="66" y="18" width="2" height="2" fill="#0f150e"/><rect x="0" y="20" width="2" height="2" fill="#0f150e"/><rect x="2" y="20" width="2" height="2" fill="#1c211a"/><rect x="4" y="20" width="2" height="2" fill="#191e18"/><rect x="6" y="20" width="2" height="2" fill="#1a1f18"/><rect x="8" y="20" width="2" height="2" fill="#3c483b"/><rect x="10" y="20" width="2" height="2" fill="#1e291d"/><rect x="12" y="20" width="2" height="2" fill="#2c3c2a"/><rect x="14" y="20" width="2" height="2" fill="#1d1f1a"/><rect x="16" y="20" width="2" height="2" fill="#1a1b17"/><rect x="18" y="20" width="2" height="2" fill="#23241f"/><rect x="20" y="20" width="2" height="2" fill="#1f211c"/><rect x="22" y="20" width="2" height="2" fill="#607b5b"/><rect x="24" y="20" width="2" height="2" fill="#283426"/><rect x="26" y="20" width="2" height="2" fill="#64815f"/><rect x="28" y="20" width="2" height="2" fill="#273225"/><rect x="30" y="20" width="2" height="2" fill="#648160"/><rect x="32" y="20" width="2" height="2" fill="#475445"/><rect x="34" y="20" width="2" height="2" fill="#111410"/><rect x="36" y="20" width="2" height="2" fill="#4c6349"/><rect x="38" y="20" width="2" height="2" fill="#698865"/><rect x="40" y="20" width="2" height="2" fill="#364634"/><rect x="42" y="20" width="2" height="2" fill="#171a15"/><rect x="44" y="20" width="2" height="2" fill="#394f38"/><rect x="46" y="20" width="2" height="2" fill="#2a3a29"/><rect x="48" y="20" width="2" height="2" fill="#233122"/><rect x="50" y="20" width="2" height="2" fill="#263525"/><rect x="52" y="20" width="2" height="2" fill="#202d1f"/><rect x="54" y="20" width="2" height="2" fill="#283727"/><rect x="56" y="20" width="2" height="2" fill="#2e3f2d"/><rect x="58" y="20" width="2" height="2" fill="#2e3f2c"/><rect x="60" y="20" width="2" height="2" fill="#466044"/><rect x="62" y="20" width="2" height="2" fill="#0f160f"/><rect x="64" y="20" width="2" height="2" fill="#10160f"/><rect x="66" y="20" width="2" height="2" fill="#0f150e"/><rect x="0" y="22" width="2" height="2" fill="#0f160f"/><rect x="2" y="22" width="2" height="2" fill="#161a14"/><rect x="4" y="22" width="2" height="2" fill="#171c16"/><rect x="6" y="22" width="2" height="2" fill="#161a14"/><rect x="8" y="22" width="2" height="2" fill="#4f5f4d"/><rect x="10" y="22" width="2" height="2" fill="#293827"/><rect x="12" y="22" width="2" height="2" fill="#212d20"/><rect x="14" y="22" width="2" height="2" fill="#1e1f1b"/><rect x="16" y="22" width="2" height="2" fill="#22241f"/><rect x="18" y="22" width="2" height="2" fill="#1a1b17"/><rect x="20" y="22" width="2" height="2" fill="#21231e"/><rect x="22" y="22" width="2" height="2" fill="#435640"/><rect x="24" y="22" width="2" height="2" fill="#485d45"/><rect x="26" y="22" width="2" height="2" fill="#627f5e"/><rect x="28" y="22" width="2" height="2" fill="#40533d"/><rect x="30" y="22" width="2" height="2" fill="#495e45"/><rect x="32" y="22" width="2" height="2" fill="#4c5a4b"/><rect x="34" y="22" width="2" height="2" fill="#6e8d69"/><rect x="36" y="22" width="2" height="2" fill="#111410"/><rect x="38" y="22" width="2" height="2" fill="#627e5e"/><rect x="40" y="22" width="2" height="2" fill="#587254"/><rect x="42" y="22" width="2" height="2" fill="#191d18"/><rect x="44" y="22" width="2" height="2" fill="#334632"/><rect x="46" y="22" width="2" height="2" fill="#30422f"/><rect x="48" y="22" width="2" height="2" fill="#212d20"/><rect x="50" y="22" width="2" height="2" fill="#243223"/><rect x="52" y="22" width="2" height="2" fill="#212e20"/><rect x="54" y="22" width="2" height="2" fill="#455f43"/><rect x="56" y="22" width="2" height="2" fill="#2b3b2a"/><rect x="58" y="22" width="2" height="2" fill="#263525"/><rect x="60" y="22" width="2" height="2" fill="#222f21"/><rect x="62" y="22" width="2" height="2" fill="#111810"/><rect x="64" y="22" width="2" height="2" fill="#111810"/><rect x="66" y="22" width="2" height="2" fill="#101710"/><rect x="0" y="24" width="2" height="2" fill="#0f160f"/><rect x="2" y="24" width="2" height="2" fill="#171c16"/><rect x="4" y="24" width="2" height="2" fill="#171c16"/><rect x="6" y="24" width="2" height="2" fill="#191d17"/><rect x="8" y="24" width="2" height="2" fill="#202c1f"/><rect x="10" y="24" width="2" height="2" fill="#263525"/><rect x="12" y="24" width="2" height="2" fill="#232f21"/><rect x="14" y="24" width="2" height="2" fill="#23251f"/><rect x="16" y="24" width="2" height="2" fill="#23251f"/><rect x="18" y="24" width="2" height="2" fill="#1f201b"/><rect x="20" y="24" width="2" height="2" fill="#1b1d18"/><rect x="22" y="24" width="2" height="2" fill="#6c8c67"/><rect x="24" y="24" width="2" height="2" fill="#394a37"/><rect x="26" y="24" width="2" height="2" fill="#3d4f3a"/><rect x="28" y="24" width="2" height="2" fill="#212b20"/><rect x="30" y="24" width="2" height="2" fill="#3f513c"/><rect x="32" y="24" width="2" height="2" fill="#475446"/><rect x="34" y="24" width="2" height="2" fill="#485d45"/><rect x="36" y="24" width="2" height="2" fill="#11140f"/><rect x="38" y="24" width="2" height="2" fill="#495e45"/><rect x="40" y="24" width="2" height="2" fill="#222c20"/><rect x="42" y="24" width="2" height="2" fill="#181b16"/><rect x="44" y="24" width="2" height="2" fill="#222f21"/><rect x="46" y="24" width="2" height="2" fill="#334631"/><rect x="48" y="24" width="2" height="2" fill="#202c1f"/><rect x="50" y="24" width="2" height="2" fill="#1f2b1e"/><rect x="52" y="24" width="2" height="2" fill="#2e3f2c"/><rect x="54" y="24" width="2" height="2" fill="#2a3a29"/><rect x="56" y="24" width="2" height="2" fill="#3d533b"/><rect x="58" y="24" width="2" height="2" fill="#3a4f38"/><rect x="60" y="24" width="2" height="2" fill="#455f43"/><rect x="62" y="24" width="2" height="2" fill="#101710"/><rect x="64" y="24" width="2" height="2" fill="#111710"/><rect x="66" y="24" width="2" height="2" fill="#111810"/><rect x="0" y="26" width="2" height="2" fill="#10160f"/><rect x="2" y="26" width="2" height="2" fill="#181c16"/><rect x="4" y="26" width="2" height="2" fill="#1c221a"/><rect x="6" y="26" width="2" height="2" fill="#161b15"/><rect x="8" y="26" width="2" height="2" fill="#1c231b"/><rect x="10" y="26" width="2" height="2" fill="#1c221a"/><rect x="12" y="26" width="2" height="2" fill="#1c2419"/><rect x="14" y="26" width="2" height="2" fill="#21231e"/><rect x="16" y="26" width="2" height="2" fill="#22241e"/><rect x="18" y="26" width="2" height="2" fill="#1f211c"/><rect x="20" y="26" width="2" height="2" fill="#20221d"/><rect x="22" y="26" width="2" height="2" fill="#5b7847"/><rect x="24" y="26" width="2" height="2" fill="#36482a"/><rect x="26" y="26" width="2" height="2" fill="#4b643a"/><rect x="28" y="26" width="2" height="2" fill="#4a623a"/><rect x="30" y="26" width="2" height="2" fill="#5c7a48"/><rect x="32" y="26" width="2" height="2" fill="#5a7846"/><rect x="34" y="26" width="2" height="2" fill="#5b7947"/><rect x="36" y="26" width="2" height="2" fill="#4e683d"/><rect x="38" y="26" width="2" height="2" fill="#131611"/><rect x="40" y="26" width="2" height="2" fill="#273123"/><rect x="42" y="26" width="2" height="2" fill="#1a1d18"/><rect x="44" y="26" width="2" height="2" fill="#384d2c"/><rect x="46" y="26" width="2" height="2" fill="#2e3f24"/><rect x="48" y="26" width="2" height="2" fill="#334628"/><rect x="50" y="26" width="2" height="2" fill="#3f5632"/><rect x="52" y="26" width="2" height="2" fill="#324427"/><rect x="54" y="26" width="2" height="2" fill="#587845"/><rect x="56" y="26" width="2" height="2" fill="#49643a"/><rect x="58" y="26" width="2" height="2" fill="#4d693d"/><rect x="60" y="26" width="2" height="2" fill="#263022"/><rect x="62" y="26" width="2" height="2" fill="#101710"/><rect x="64" y="26" width="2" height="2" fill="#10160f"/><rect x="66" y="26" width="2" height="2" fill="#0f140e"/><rect x="0" y="28" width="2" height="2" fill="#111810"/><rect x="2" y="28" width="2" height="2" fill="#1a2019"/><rect x="4" y="28" width="2" height="2" fill="#191e17"/><rect x="6" y="28" width="2" height="2" fill="#191e17"/><rect x="8" y="28" width="2" height="2" fill="#1c231a"/><rect x="10" y="28" width="2" height="2" fill="#181d16"/><rect x="12" y="28" width="2" height="2" fill="#283324"/><rect x="14" y="28" width="2" height="2" fill="#1c1d19"/><rect x="16" y="28" width="2" height="2" fill="#1a1b17"/><rect x="18" y="28" width="2" height="2" fill="#1c1d19"/><rect x="20" y="28" width="2" height="2" fill="#20221d"/><rect x="22" y="28" width="2" height="2" fill="#3a4d2d"/><rect x="24" y="28" width="2" height="2" fill="#577344"/><rect x="26" y="28" width="2" height="2" fill="#63844e"/><rect x="28" y="28" width="2" height="2" fill="#496139"/><rect x="30" y="28" width="2" height="2" fill="#435934"/><rect x="32" y="28" width="2" height="2" fill="#486039"/><rect x="34" y="28" width="2" height="2" fill="#546f41"/><rect x="36" y="28" width="2" height="2" fill="#587545"/><rect x="38" y="28" width="2" height="2" fill="#121510"/><rect x="40" y="28" width="2" height="2" fill="#263123"/><rect x="42" y="28" width="2" height="2" fill="#171a15"/><rect x="44" y="28" width="2" height="2" fill="#344729"/><rect x="46" y="28" width="2" height="2" fill="#394f2d"/><rect x="48" y="28" width="2" height="2" fill="#537142"/><rect x="50" y="28" width="2" height="2" fill="#3c5230"/><rect x="52" y="28" width="2" height="2" fill="#4a653a"/><rect x="54" y="28" width="2" height="2" fill="#2d3e24"/><rect x="56" y="28" width="2" height="2" fill="#2f4125"/><rect x="58" y="28" width="2" height="2" fill="#3a502e"/><rect x="60" y="28" width="2" height="2" fill="#273123"/><rect x="62" y="28" width="2" height="2" fill="#101710"/><rect x="64" y="28" width="2" height="2" fill="#101710"/><rect x="66" y="28" width="2" height="2" fill="#0f160f"/><rect x="0" y="30" width="2" height="2" fill="#10160f"/><rect x="2" y="30" width="2" height="2" fill="#191d17"/><rect x="4" y="30" width="2" height="2" fill="#191d17"/><rect x="6" y="30" width="2" height="2" fill="#161b15"/><rect x="8" y="30" width="2" height="2" fill="#1e251c"/><rect x="10" y="30" width="2" height="2" fill="#191e17"/><rect x="12" y="30" width="2" height="2" fill="#2c3828"/><rect x="14" y="30" width="2" height="2" fill="#22241f"/><rect x="16" y="30" width="2" height="2" fill="#191a16"/><rect x="18" y="30" width="2" height="2" fill="#1e1f1a"/><rect x="20" y="30" width="2" height="2" fill="#21231e"/><rect x="22" y="30" width="2" height="2" fill="#63844d"/><rect x="24" y="30" width="2" height="2" fill="#475e37"/><rect x="26" y="30" width="2" height="2" fill="#3d5130"/><rect x="28" y="30" width="2" height="2" fill="#3a4d2d"/><rect x="30" y="30" width="2" height="2" fill="#62824c"/><rect x="32" y="30" width="2" height="2" fill="#3a4d2d"/><rect x="34" y="30" width="2" height="2" fill="#4e683d"/><rect x="36" y="30" width="2" height="2" fill="#36482a"/><rect x="38" y="30" width="2" height="2" fill="#4b643a"/><rect x="40" y="30" width="2" height="2" fill="#2b3727"/><rect x="42" y="30" width="2" height="2" fill="#171a15"/><rect x="44" y="30" width="2" height="2" fill="#577745"/><rect x="46" y="30" width="2" height="2" fill="#476138"/><rect x="48" y="30" width="2" height="2" fill="#5a7b47"/><rect x="50" y="30" width="2" height="2" fill="#516e40"/><rect x="52" y="30" width="2" height="2" fill="#384d2d"/><rect x="54" y="30" width="2" height="2" fill="#5b7c48"/><rect x="56" y="30" width="2" height="2" fill="#455f37"/><rect x="58" y="30" width="2" height="2" fill="#2e3e24"/><rect x="60" y="30" width="2" height="2" fill="#1b2319"/><rect x="62" y="30" width="2" height="2" fill="#10160f"/><rect x="64" y="30" width="2" height="2" fill="#10160f"/><rect x="66" y="30" width="2" height="2" fill="#0f160f"/><rect x="0" y="32" width="2" height="2" fill="#0f150e"/><rect x="2" y="32" width="2" height="2" fill="#181c16"/><rect x="4" y="32" width="2" height="2" fill="#181c16"/><rect x="6" y="32" width="2" height="2" fill="#1b2019"/><rect x="8" y="32" width="2" height="2" fill="#171d16"/><rect x="10" y="32" width="2" height="2" fill="#1c231b"/><rect x="12" y="32" width="2" height="2" fill="#293526"/><rect x="14" y="32" width="2" height="2" fill="#1a1c17"/><rect x="16" y="32" width="2" height="2" fill="#22241f"/><rect x="18" y="32" width="2" height="2" fill="#20221d"/><rect x="20" y="32" width="2" height="2" fill="#22241e"/><rect x="22" y="32" width="2" height="2" fill="#3e5330"/><rect x="24" y="32" width="2" height="2" fill="#435934"/><rect x="26" y="32" width="2" height="2" fill="#445a35"/><rect x="28" y="32" width="2" height="2" fill="#65864f"/><rect x="30" y="32" width="2" height="2" fill="#4e683d"/><rect x="32" y="32" width="2" height="2" fill="#425833"/><rect x="34" y="32" width="2" height="2" fill="#465d36"/><rect x="36" y="32" width="2" height="2" fill="#3d5230"/><rect x="38" y="32" width="2" height="2" fill="#314126"/><rect x="40" y="32" width="2" height="2" fill="#1d251a"/><rect x="42" y="32" width="2" height="2" fill="#1a1e19"/><rect x="44" y="32" width="2" height="2" fill="#3b512f"/><rect x="46" y="32" width="2" height="2" fill="#5d7f49"/><rect x="48" y="32" width="2" height="2" fill="#394e2d"/><rect x="50" y="32" width="2" height="2" fill="#3a4f2e"/><rect x="52" y="32" width="2" height="2" fill="#476138"/><rect x="54" y="32" width="2" height="2" fill="#364a2b"/><rect x="56" y="32" width="2" height="2" fill="#405732"/><rect x="58" y="32" width="2" height="2" fill="#5e804a"/><rect x="60" y="32" width="2" height="2" fill="#2a3626"/><rect x="62" y="32" width="2" height="2" fill="#111810"/><rect x="64" y="32" width="2" height="2" fill="#10170f"/><rect x="66" y="32" width="2" height="2" fill="#111810"/><rect x="0" y="34" width="2" height="2" fill="#111810"/><rect x="2" y="34" width="2" height="2" fill="#191e18"/><rect x="4" y="34" width="2" height="2" fill="#1a1f19"/><rect x="6" y="34" width="2" height="2" fill="#161a14"/><rect x="8" y="34" width="2" height="2" fill="#1c231b"/><rect x="10" y="34" width="2" height="2" fill="#1a2119"/><rect x="12" y="34" width="2" height="2" fill="#283324"/><rect x="14" y="34" width="2" height="2" fill="#20211c"/><rect x="16" y="34" width="2" height="2" fill="#1c1d19"/><rect x="18" y="34" width="2" height="2" fill="#191b17"/><rect x="20" y="34" width="2" height="2" fill="#22241f"/><rect x="22" y="34" width="2" height="2" fill="#35472a"/><rect x="24" y="34" width="2" height="2" fill="#486038"/><rect x="26" y="34" width="2" height="2" fill="#415733"/><rect x="28" y="34" width="2" height="2" fill="#3f5331"/><rect x="30" y="34" width="2" height="2" fill="#577344"/><rect x="32" y="34" width="2" height="2" fill="#63844e"/><rect x="34" y="34" width="2" height="2" fill="#3d512f"/><rect x="36" y="34" width="2" height="2" fill="#526d40"/><rect x="38" y="34" width="2" height="2" fill="#3f5431"/><rect x="40" y="34" width="2" height="2" fill="#252f21"/><rect x="42" y="34" width="2" height="2" fill="#181b17"/><rect x="44" y="34" width="2" height="2" fill="#35482a"/><rect x="46" y="34" width="2" height="2" fill="#35482a"/><rect x="48" y="34" width="2" height="2" fill="#374b2c"/><rect x="50" y="34" width="2" height="2" fill="#5b7d48"/><rect x="52" y="34" width="2" height="2" fill="#466037"/><rect x="54" y="34" width="2" height="2" fill="#384c2c"/><rect x="56" y="34" width="2" height="2" fill="#5b7d48"/><rect x="58" y="34" width="2" height="2" fill="#60834c"/><rect x="60" y="34" width="2" height="2" fill="#232c20"/><rect x="62" y="34" width="2" height="2" fill="#0f150e"/><rect x="64" y="34" width="2" height="2" fill="#0f150e"/><rect x="66" y="34" width="2" height="2" fill="#0f150e"/><rect x="0" y="36" width="2" height="2" fill="#0f160f"/><rect x="2" y="36" width="2" height="2" fill="#161a15"/><rect x="4" y="36" width="2" height="2" fill="#171c16"/><rect x="6" y="36" width="2" height="2" fill="#171c16"/><rect x="8" y="36" width="2" height="2" fill="#1d1f19"/><rect x="10" y="36" width="2" height="2" fill="#20221b"/><rect x="12" y="36" width="2" height="2" fill="#1f201a"/><rect x="14" y="36" width="2" height="2" fill="#1d1f1a"/><rect x="16" y="36" width="2" height="2" fill="#1d1f1a"/><rect x="18" y="36" width="2" height="2" fill="#1e201b"/><rect x="20" y="36" width="2" height="2" fill="#1d1e1a"/><rect x="22" y="36" width="2" height="2" fill="#252920"/><rect x="24" y="36" width="2" height="2" fill="#20241c"/><rect x="26" y="36" width="2" height="2" fill="#24281f"/><rect x="28" y="36" width="2" height="2" fill="#2f3429"/><rect x="30" y="36" width="2" height="2" fill="#21251d"/><rect x="32" y="36" width="2" height="2" fill="#272c22"/><rect x="34" y="36" width="2" height="2" fill="#292e24"/><rect x="36" y="36" width="2" height="2" fill="#2d3227"/><rect x="38" y="36" width="2" height="2" fill="#23271e"/><rect x="40" y="36" width="2" height="2" fill="#23281f"/><rect x="42" y="36" width="2" height="2" fill="#171b16"/><rect x="44" y="36" width="2" height="2" fill="#262a21"/><rect x="46" y="36" width="2" height="2" fill="#262b21"/><rect x="48" y="36" width="2" height="2" fill="#2e3429"/><rect x="50" y="36" width="2" height="2" fill="#2d3227"/><rect x="52" y="36" width="2" height="2" fill="#2d3327"/><rect x="54" y="36" width="2" height="2" fill="#20231c"/><rect x="56" y="36" width="2" height="2" fill="#181914"/><rect x="58" y="36" width="2" height="2" fill="#1e201a"/><rect x="60" y="36" width="2" height="2" fill="#20221b"/><rect x="62" y="36" width="2" height="2" fill="#10160f"/><rect x="64" y="36" width="2" height="2" fill="#10170f"/><rect x="66" y="36" width="2" height="2" fill="#0f140e"/><rect x="0" y="38" width="2" height="2" fill="#10160f"/><rect x="2" y="38" width="2" height="2" fill="#1c211a"/><rect x="4" y="38" width="2" height="2" fill="#1b2019"/><rect x="6" y="38" width="2" height="2" fill="#1b2119"/><rect x="8" y="38" width="2" height="2" fill="#21231c"/><rect x="10" y="38" width="2" height="2" fill="#1a1b16"/><rect x="12" y="38" width="2" height="2" fill="#181a15"/><rect x="14" y="38" width="2" height="2" fill="#1b1c18"/><rect x="16" y="38" width="2" height="2" fill="#1e201b"/><rect x="18" y="38" width="2" height="2" fill="#20221c"/><rect x="20" y="38" width="2" height="2" fill="#23241f"/><rect x="22" y="38" width="2" height="2" fill="#2b3025"/><rect x="24" y="38" width="2" height="2" fill="#292f24"/><rect x="26" y="38" width="2" height="2" fill="#2b3126"/><rect x="28" y="38" width="2" height="2" fill="#262b22"/><rect x="30" y="38" width="2" height="2" fill="#282d23"/><rect x="32" y="38" width="2" height="2" fill="#20241c"/><rect x="34" y="38" width="2" height="2" fill="#2c3126"/><rect x="36" y="38" width="2" height="2" fill="#23271f"/><rect x="38" y="38" width="2" height="2" fill="#2e3328"/><rect x="40" y="38" width="2" height="2" fill="#292f24"/><rect x="42" y="38" width="2" height="2" fill="#242820"/><rect x="44" y="38" width="2" height="2" fill="#21251d"/><rect x="46" y="38" width="2" height="2" fill="#23281f"/><rect x="48" y="38" width="2" height="2" fill="#292e24"/><rect x="50" y="38" width="2" height="2" fill="#2a2f25"/><rect x="52" y="38" width="2" height="2" fill="#21251d"/><rect x="54" y="38" width="2" height="2" fill="#20241c"/><rect x="56" y="38" width="2" height="2" fill="#1c1e18"/><rect x="58" y="38" width="2" height="2" fill="#1d1f19"/><rect x="60" y="38" width="2" height="2" fill="#1b1d17"/><rect x="62" y="38" width="2" height="2" fill="#0f150e"/><rect x="64" y="38" width="2" height="2" fill="#10170f"/><rect x="66" y="38" width="2" height="2" fill="#0f150e"/><rect x="0" y="40" width="2" height="2" fill="#0f160f"/><rect x="2" y="40" width="2" height="2" fill="#191d17"/><rect x="4" y="40" width="2" height="2" fill="#1c211a"/><rect x="6" y="40" width="2" height="2" fill="#1a1f18"/><rect x="8" y="40" width="2" height="2" fill="#20221b"/><rect x="10" y="40" width="2" height="2" fill="#1c1e18"/><rect x="12" y="40" width="2" height="2" fill="#1a1b16"/><rect x="14" y="40" width="2" height="2" fill="#1b1d18"/><rect x="16" y="40" width="2" height="2" fill="#23251f"/><rect x="18" y="40" width="2" height="2" fill="#20221d"/><rect x="20" y="40" width="2" height="2" fill="#1c1e19"/><rect x="22" y="40" width="2" height="2" fill="#20231c"/><rect x="24" y="40" width="2" height="2" fill="#272c22"/><rect x="26" y="40" width="2" height="2" fill="#2a2f25"/><rect x="28" y="40" width="2" height="2" fill="#262b21"/><rect x="30" y="40" width="2" height="2" fill="#23281f"/><rect x="32" y="40" width="2" height="2" fill="#2a2f25"/><rect x="34" y="40" width="2" height="2" fill="#2e3428"/><rect x="36" y="40" width="2" height="2" fill="#23271e"/><rect x="38" y="40" width="2" height="2" fill="#20241c"/><rect x="40" y="40" width="2" height="2" fill="#252920"/><rect x="42" y="40" width="2" height="2" fill="#262b21"/><rect x="44" y="40" width="2" height="2" fill="#2a2f25"/><rect x="46" y="40" width="2" height="2" fill="#22271e"/><rect x="48" y="40" width="2" height="2" fill="#2c3126"/><rect x="50" y="40" width="2" height="2" fill="#2b3026"/><rect x="52" y="40" width="2" height="2" fill="#272c22"/><rect x="54" y="40" width="2" height="2" fill="#22271e"/><rect x="56" y="40" width="2" height="2" fill="#21231c"/><rect x="58" y="40" width="2" height="2" fill="#1a1c17"/><rect x="60" y="40" width="2" height="2" fill="#1f211b"/><rect x="62" y="40" width="2" height="2" fill="#0f150e"/><rect x="64" y="40" width="2" height="2" fill="#0f150e"/><rect x="66" y="40" width="2" height="2" fill="#111710"/><rect x="0" y="42" width="2" height="2" fill="#0f160f"/><rect x="2" y="42" width="2" height="2" fill="#1c211a"/><rect x="4" y="42" width="2" height="2" fill="#191e17"/><rect x="6" y="42" width="2" height="2" fill="#171b15"/><rect x="8" y="42" width="2" height="2" fill="#1a1b16"/><rect x="10" y="42" width="2" height="2" fill="#1b1d17"/><rect x="12" y="42" width="2" height="2" fill="#1e201a"/><rect x="14" y="42" width="2" height="2" fill="#21221c"/><rect x="16" y="42" width="2" height="2" fill="#191a15"/><rect x="18" y="42" width="2" height="2" fill="#1b1d17"/><rect x="20" y="42" width="2" height="2" fill="#23271e"/><rect x="22" y="42" width="2" height="2" fill="#2f3429"/><rect x="24" y="42" width="2" height="2" fill="#21261d"/><rect x="26" y="42" width="2" height="2" fill="#20241c"/><rect x="28" y="42" width="2" height="2" fill="#20241c"/><rect x="30" y="42" width="2" height="2" fill="#252a21"/><rect x="32" y="42" width="2" height="2" fill="#2d3328"/><rect x="34" y="42" width="2" height="2" fill="#2d3328"/><rect x="36" y="42" width="2" height="2" fill="#2b3025"/><rect x="38" y="42" width="2" height="2" fill="#2f3529"/><rect x="40" y="42" width="2" height="2" fill="#2e3428"/><rect x="42" y="42" width="2" height="2" fill="#242920"/><rect x="44" y="42" width="2" height="2" fill="#22261e"/><rect x="46" y="42" width="2" height="2" fill="#2e3428"/><rect x="48" y="42" width="2" height="2" fill="#2b3026"/><rect x="50" y="42" width="2" height="2" fill="#20241c"/><rect x="52" y="42" width="2" height="2" fill="#2a2f25"/><rect x="54" y="42" width="2" height="2" fill="#252a21"/><rect x="56" y="42" width="2" height="2" fill="#1b1d17"/><rect x="58" y="42" width="2" height="2" fill="#1b1c17"/><rect x="60" y="42" width="2" height="2" fill="#191a15"/><rect x="62" y="42" width="2" height="2" fill="#0f140e"/><rect x="64" y="42" width="2" height="2" fill="#0f160f"/><rect x="66" y="42" width="2" height="2" fill="#10160f"/><rect x="0" y="44" width="2" height="2" fill="#111810"/><rect x="2" y="44" width="2" height="2" fill="#191a15"/><rect x="4" y="44" width="2" height="2" fill="#21231c"/><rect x="6" y="44" width="2" height="2" fill="#191b16"/><rect x="8" y="44" width="2" height="2" fill="#1b1c17"/><rect x="10" y="44" width="2" height="2" fill="#1f211b"/><rect x="12" y="44" width="2" height="2" fill="#1f211b"/><rect x="14" y="44" width="2" height="2" fill="#1c1d18"/><rect x="16" y="44" width="2" height="2" fill="#181914"/><rect x="18" y="44" width="2" height="2" fill="#1c1e18"/><rect x="20" y="44" width="2" height="2" fill="#1b1d17"/><rect x="22" y="44" width="2" height="2" fill="#20221c"/><rect x="24" y="44" width="2" height="2" fill="#191b16"/><rect x="26" y="44" width="2" height="2" fill="#1b1c17"/><rect x="28" y="44" width="2" height="2" fill="#20221b"/><rect x="30" y="44" width="2" height="2" fill="#181914"/><rect x="32" y="44" width="2" height="2" fill="#1b1d17"/><rect x="34" y="44" width="2" height="2" fill="#1f211b"/><rect x="36" y="44" width="2" height="2" fill="#1f211a"/><rect x="38" y="44" width="2" height="2" fill="#181914"/><rect x="40" y="44" width="2" height="2" fill="#181914"/><rect x="42" y="44" width="2" height="2" fill="#181915"/><rect x="44" y="44" width="2" height="2" fill="#20221c"/><rect x="46" y="44" width="2" height="2" fill="#1a1b16"/><rect x="48" y="44" width="2" height="2" fill="#1f201a"/><rect x="50" y="44" width="2" height="2" fill="#20221b"/><rect x="52" y="44" width="2" height="2" fill="#1b1c17"/><rect x="54" y="44" width="2" height="2" fill="#1a1c16"/><rect x="56" y="44" width="2" height="2" fill="#21221c"/><rect x="58" y="44" width="2" height="2" fill="#1d1f19"/><rect x="60" y="44" width="2" height="2" fill="#1a1b16"/><rect x="62" y="44" width="2" height="2" fill="#111710"/><rect x="64" y="44" width="2" height="2" fill="#0f160f"/><rect x="66" y="44" width="2" height="2" fill="#0f160f"/><rect x="0" y="46" width="2" height="2" fill="#0f140e"/><rect x="2" y="46" width="2" height="2" fill="#1f201a"/><rect x="4" y="46" width="2" height="2" fill="#20221c"/><rect x="6" y="46" width="2" height="2" fill="#1d1f19"/><rect x="8" y="46" width="2" height="2" fill="#20221c"/><rect x="10" y="46" width="2" height="2" fill="#181914"/><rect x="12" y="46" width="2" height="2" fill="#1a1b16"/><rect x="14" y="46" width="2" height="2" fill="#1c1e18"/><rect x="16" y="46" width="2" height="2" fill="#21221c"/><rect x="18" y="46" width="2" height="2" fill="#21221c"/><rect x="20" y="46" width="2" height="2" fill="#1b1d17"/><rect x="22" y="46" width="2" height="2" fill="#1a1b16"/><rect x="24" y="46" width="2" height="2" fill="#1c1d18"/><rect x="26" y="46" width="2" height="2" fill="#1c1e18"/><rect x="28" y="46" width="2" height="2" fill="#20221c"/><rect x="30" y="46" width="2" height="2" fill="#191b16"/><rect x="32" y="46" width="2" height="2" fill="#1f211b"/><rect x="34" y="46" width="2" height="2" fill="#1e201a"/><rect x="36" y="46" width="2" height="2" fill="#1f211b"/><rect x="38" y="46" width="2" height="2" fill="#1f211a"/><rect x="40" y="46" width="2" height="2" fill="#1d1f19"/><rect x="42" y="46" width="2" height="2" fill="#1b1c17"/><rect x="44" y="46" width="2" height="2" fill="#1a1c17"/><rect x="46" y="46" width="2" height="2" fill="#1b1c17"/><rect x="48" y="46" width="2" height="2" fill="#1f211a"/><rect x="50" y="46" width="2" height="2" fill="#181a15"/><rect x="52" y="46" width="2" height="2" fill="#191b16"/><rect x="54" y="46" width="2" height="2" fill="#1f201a"/><rect x="56" y="46" width="2" height="2" fill="#1a1b16"/><rect x="58" y="46" width="2" height="2" fill="#181915"/><rect x="60" y="46" width="2" height="2" fill="#181914"/><rect x="62" y="46" width="2" height="2" fill="#10170f"/><rect x="64" y="46" width="2" height="2" fill="#0f160f"/><rect x="66" y="46" width="2" height="2" fill="#111810"/><rect x="0" y="48" width="2" height="2" fill="#0d0e0b"/><rect x="2" y="48" width="2" height="2" fill="#0d0e0b"/><rect x="4" y="48" width="2" height="2" fill="#0c0d0a"/><rect x="6" y="48" width="2" height="2" fill="#0c0d0a"/><rect x="8" y="48" width="2" height="2" fill="#0c0d0a"/><rect x="10" y="48" width="2" height="2" fill="#0c0e0a"/><rect x="12" y="48" width="2" height="2" fill="#0c0e0b"/><rect x="14" y="48" width="2" height="2" fill="#0c0e0a"/><rect x="16" y="48" width="2" height="2" fill="#0c0d0a"/><rect x="18" y="48" width="2" height="2" fill="#0c0e0a"/><rect x="20" y="48" width="2" height="2" fill="#0c0e0b"/><rect x="22" y="48" width="2" height="2" fill="#0c0e0b"/><rect x="24" y="48" width="2" height="2" fill="#0c0e0b"/><rect x="26" y="48" width="2" height="2" fill="#0d0e0b"/><rect x="28" y="48" width="2" height="2" fill="#0c0e0b"/><rect x="30" y="48" width="2" height="2" fill="#0c0d0a"/><rect x="32" y="48" width="2" height="2" fill="#0d0e0b"/><rect x="34" y="48" width="2" height="2" fill="#0c0d0a"/><rect x="36" y="48" width="2" height="2" fill="#0c0e0b"/><rect x="38" y="48" width="2" height="2" fill="#0c0e0a"/><rect x="40" y="48" width="2" height="2" fill="#0c0e0b"/><rect x="42" y="48" width="2" height="2" fill="#0c0d0a"/><rect x="44" y="48" width="2" height="2" fill="#0c0d0a"/><rect x="46" y="48" width="2" height="2" fill="#0c0d0a"/><rect x="48" y="48" width="2" height="2" fill="#0c0d0a"/><rect x="50" y="48" width="2" height="2" fill="#0d0e0b"/><rect x="52" y="48" width="2" height="2" fill="#0c0e0b"/><rect x="54" y="48" width="2" height="2" fill="#0c0d0a"/><rect x="56" y="48" width="2" height="2" fill="#0c0e0a"/><rect x="58" y="48" width="2" height="2" fill="#0d0e0b"/><rect x="60" y="48" width="2" height="2" fill="#0c0e0a"/><rect x="62" y="48" width="2" height="2" fill="#0c0d0a"/><rect x="64" y="48" width="2" height="2" fill="#0c0e0b"/><rect x="66" y="48" width="2" height="2" fill="#0c0e0b"/></g></g></svg>
<svg class="a" style="left:0;top:0" width="690" height="447"><rect x="24" y="164.9" width="579.3" height="21.2" rx="1" fill="none" stroke="#b0b0b0" stroke-width="0.75"/></svg>
<div class="a" style="left:23.7px;top:164.6px;width:2.6px;height:21.8px;background:#42A5F5"></div>
<div class="pr pin" style="top:173.06px">In [46]:</div>
<pre class="m" style="left:78.50px;top:171.97px">img <span class="o">=</span> np.array(img)</pre>
<div class="pr pin" style="top:195.06px">In [54]:</div>
<pre class="m" style="left:78.50px;top:193.97px">pred,pred_idx,probs <span class="o">=</span> learn_inf.predict(img)</pre>
<div class="pr pin" style="top:228.76px">In [55]:</div>
<pre class="m" style="left:78.50px;top:227.67px">lbl_pred <span class="o">=</span> widgets.Label()
lbl_pred.value <span class="o">=</span> <span class="s">f'Prediction: </span>{pred}<span class="s">; Probability: </span>{probs[pred_idx]:<span class="n">.04</span>f}<span class="s">'</span>
lbl_pred</pre>
<div class="pr pout" style="top:261.56px">Out[55]:</div>
<div class="t" style="left:80px;top:265.6px;font-size:6.83px;color:#111;-webkit-text-stroke:0.12px">Prediction: forest; Probability: 1.0000</div>
<div class="pr pin" style="top:291.06px">In [34]:</div>
<pre class="m" style="left:78.50px;top:289.97px">btn_run <span class="o">=</span> widgets.Button(description<span class="o">=</span><span class="s">'Classify'</span>)
btn_run</pre>
<div class="pr pout" style="top:315.26px">Out[34]:</div>
<div class="a" style="left:79.7px;top:314.5px;width:77.7px;height:14.2px;background:#eeeeee"></div>
<div class="t" style="left:79.7px;width:77.7px;text-align:center;top:319.2px;font-size:6.83px;color:#222;-webkit-text-stroke:0.05px">Classify</div>
<div class="pr pin" style="top:344.76px">In [63]:</div>
<pre class="m" style="left:78.50px;top:343.67px"><span class="k">def</span> <span class="d">on_click_classify</span>(change):
    img <span class="o">=</span> Image.open(BytesIO(btn_upload.value[<span class="o">-</span><span class="n">1</span>].content))
    out_pl.clear_output()
    <span class="k">with</span> out_pl: display(img.to_thumb(<span class="n">128</span>,<span class="n">128</span>))
    pred,pred_idx,probs <span class="o">=</span> learn_inf.predict(img)
    lbl_pred.value <span class="o">=</span> <span class="s">f'Prediction: </span>{pred}<span class="s">; Probability: </span>{probs[pred_idx]:<span class="n">.01</span>f}<span class="s">'</span>

btn_run.on_click(on_click_classify)</pre>
<div class="pr pin" style="top:428.66px">In [64]:</div>
<pre class="m" style="left:78.50px;top:427.57px">btn_upload <span class="o">=</span> widgets.FileUpload()</pre>
<div class="a" style="left:0;top:76.2px;width:690px;height:3px;background:linear-gradient(rgba(87,87,87,0.10),rgba(87,87,87,0))"></div>
</div>
</body></html>
